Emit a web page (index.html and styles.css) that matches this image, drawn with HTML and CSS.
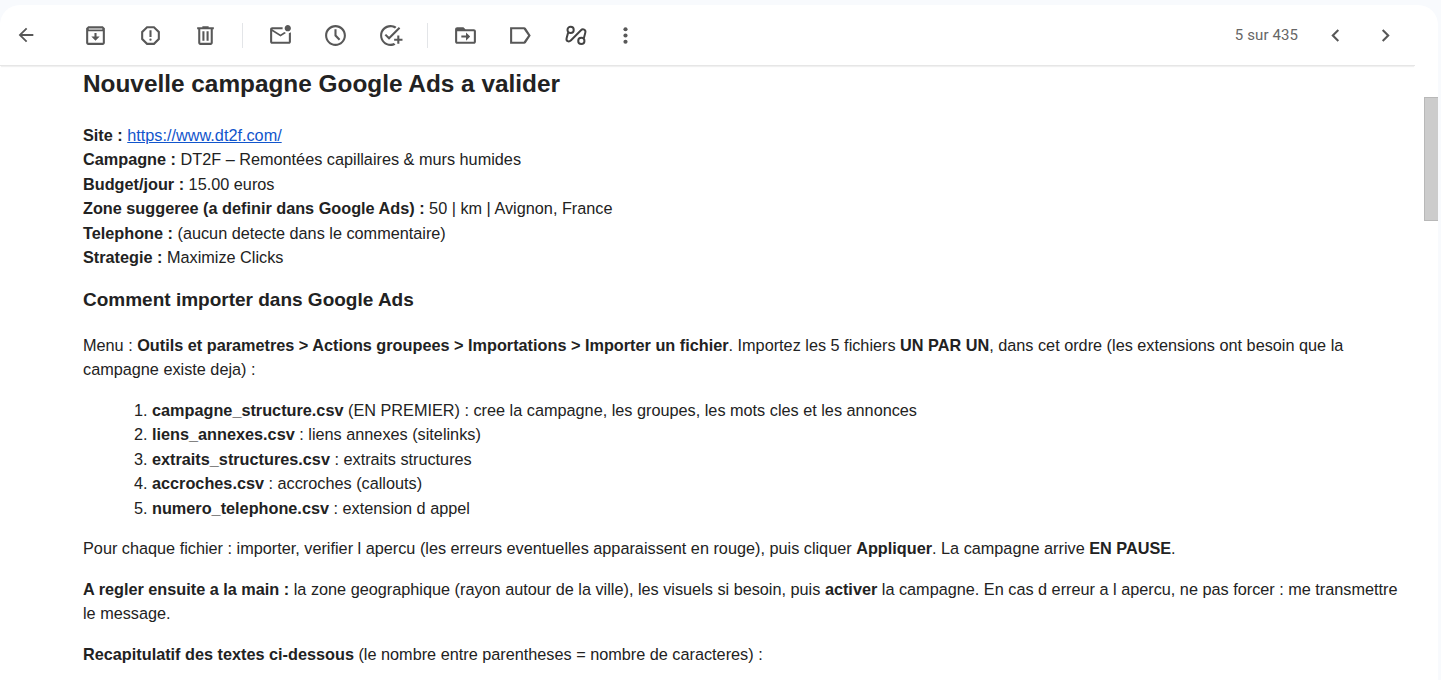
FILE: index.html
```
<!DOCTYPE html>
<html lang="fr">
<head>
    <meta charset="UTF-8">
    <meta name="viewport" content="width=device-width, initial-scale=1.0">
    <title>Nouvelle campagne Google Ads a valider</title>
    <link rel="stylesheet" href="styles.css">
</head>
<body>

<div class="panel">
    <div class="toolbar">
        <button class="tool back" aria-label="Retour">
            <svg viewBox="0 0 24 24"><path d="M20 11H7.83l5.59-5.59L12 4l-8 8 8 8 1.41-1.41L7.83 13H20v-2z"/></svg>
        </button>
        <button class="tool" aria-label="Archiver">
            <svg viewBox="0 0 24 24"><path d="M19 3H5L3 5v14c0 1.100.9 2 2 2h14c1.100 0 2-.9 2-2V5l-2-2zM5 19V8h14v11H5z"/><path d="M5.500 4.800h13V6.600h-13z" class="light"/><path d="M11 9.500v3.500H8l4 4 4-4h-3V9.500z"/></svg>
        </button>
        <button class="tool" aria-label="Signaler comme spam">
            <svg viewBox="0 0 24 24"><path d="M15.730 3H8.270L3 8.270v7.460L8.270 21h7.460L21 15.730V8.270L15.730 3zM19 14.900L14.900 19H9.100L5 14.900V9.100L9.100 5h5.800L19 9.100v5.800z"/><path d="M11 7h2v6.500h-2z"/><circle cx="12" cy="16" r="1.100"/></svg>
        </button>
        <button class="tool" aria-label="Supprimer">
            <svg viewBox="0 0 24 24"><path d="M15 4V3H9v1H4v2h1v13c0 1.100.9 2 2 2h10c1.100 0 2-.9 2-2V6h1V4h-5zm2 15H7V6h10v13z"/><path d="M9 8h2v9H9zm4 0h2v9h-2z"/></svg>
        </button>
        <span class="divider"></span>
        <button class="tool" aria-label="Marquer comme non lu">
            <svg viewBox="0 0 24 24"><path d="M22 8.980V18c0 1.100-.9 2-2 2H4c-1.100 0-2-.9-2-2V6c0-1.100.9-2 2-2h10.100c-.1.320-.1.660-.1 1s0 .680.100 1H4l8 5 3.670-2.290c.470.430 1.020.760 1.630.980L12 13 4 8v10h16V9.900c.740-.150 1.420-.480 2-.920zM16 5c0 1.660 1.340 3 3 3s3-1.340 3-3-1.340-3-3-3-3 1.340-3 3z"/></svg>
        </button>
        <button class="tool" aria-label="Mettre en attente">
            <svg viewBox="0 0 24 24"><path d="M11.990 2C6.470 2 2 6.480 2 12s4.470 10 9.990 10C17.520 22 22 17.520 22 12S17.520 2 11.990 2zM12 20c-4.420 0-8-3.580-8-8s3.580-8 8-8 8 3.580 8 8-3.580 8-8 8z"/><path d="M11 6h2v5.600l3.600 3.700-1.400 1.400L11 12.400z"/></svg>
        </button>
        <button class="tool" aria-label="Ajouter à Tasks">
            <svg viewBox="0 0 24 24"><path d="M21.400 5.180L10.590 16.100l-4.240-4.240 1.410-1.410 2.830 2.830 9.400-9.500 1.410 1.400zM12 20c-4.410 0-8-3.590-8-8s3.590-8 8-8c1.570 0 3.040.460 4.280 1.250l1.450-1.450C16.100 2.670 14.130 2 12 2 6.480 2 2 6.480 2 12s4.480 10 10 10c1.730 0 3.360-.440 4.780-1.220l-1.500-1.500c-1 .460-2.110.720-3.280.720zm6.500-5h-3v2h3v3h2v-3h3v-2h-3v-3h-2v3z"/></svg>
        </button>
        <span class="divider"></span>
        <button class="tool" aria-label="Déplacer vers">
            <svg viewBox="0 0 24 24"><path d="M20 6h-8l-2-2H4c-1.100 0-2 .9-2 2v12c0 1.100.9 2 2 2h16c1.100 0 2-.9 2-2V8c0-1.100-.9-2-2-2zm0 12H4V8h16v10z"/><path d="M3 5h7l2 2.500H3zM12.500 9v3H8v2h4.500v3l4-4z"/></svg>
        </button>
        <button class="tool" aria-label="Libellés">
            <svg viewBox="0 0 24 24"><path d="M15.500 4H2v16h13.500c.6 0 1.200-.3 1.600-.8L21.800 12l-4.700-7.200C16.700 4.300 16.100 4 15.500 4zm-.4 14H4V6h11.100l4.200 6-4.200 6z"/></svg>
        </button>
        <button class="tool" aria-label="Filtrer les messages similaires">
            <svg viewBox="0 0 24 24" class="line"><circle cx="7.300" cy="6.600" r="3"/><circle cx="17.600" cy="17.200" r="3"/><path d="M5 9l-1.500 5.400c-.8 3.200 2.100 4.200 4.200 2.100l9.300-9.300c2.200-2.200 5.200-.7 4.400 2.100L20 14.600"/></svg>
        </button>
        <button class="tool more" aria-label="Plus">
            <svg viewBox="0 0 24 24"><circle cx="12" cy="6" r="2"/><circle cx="12" cy="12" r="2"/><circle cx="12" cy="18" r="2"/></svg>
        </button>
        <div class="pager">
            <span class="count">5 sur 435</span>
            <button class="page" aria-label="Plus récent">
                <svg viewBox="0 0 24 24"><path d="M15.410 7.410L14 6l-6 6 6 6 1.410-1.410L10.830 12z"/></svg>
            </button>
            <button class="page" aria-label="Plus ancien">
                <svg viewBox="0 0 24 24"><path d="M10 6L8.590 7.410 13.170 12l-4.580 4.590L10 18l6-6z"/></svg>
            </button>
        </div>
    </div>

    <div class="content">
        <div class="mail">
            <h2>Nouvelle campagne Google Ads a valider</h2>
            <p>
                <b>Site :</b> <a href="https://www.dt2f.com/">https://www.dt2f.com/</a><br>
                <b>Campagne :</b> DT2F – Remontées capillaires &amp; murs humides<br>
                <b>Budget/jour :</b> 15.00 euros<br>
                <b>Zone suggeree (a definir dans Google Ads) :</b> 50 | km | Avignon, France<br>
                <b>Telephone :</b> (aucun detecte dans le commentaire)<br>
                <b>Strategie :</b> Maximize Clicks
            </p>
            <h3>Comment importer dans Google Ads</h3>
            <p>Menu : <b>Outils et parametres &gt; Actions groupees &gt; Importations &gt; Importer un fichier</b>. Importez les 5 fichiers <b>UN PAR UN</b>, dans cet ordre (les extensions ont besoin que la campagne existe deja) :</p>
            <ol>
                <li><b>campagne_structure.csv</b> (EN PREMIER) : cree la campagne, les groupes, les mots cles et les annonces</li>
                <li><b>liens_annexes.csv</b> : liens annexes (sitelinks)</li>
                <li><b>extraits_structures.csv</b> : extraits structures</li>
                <li><b>accroches.csv</b> : accroches (callouts)</li>
                <li><b>numero_telephone.csv</b> : extension d appel</li>
            </ol>
            <p>Pour chaque fichier : importer, verifier l apercu (les erreurs eventuelles apparaissent en rouge), puis cliquer <b>Appliquer</b>. La campagne arrive <b>EN PAUSE</b>.</p>
            <p><b>A regler ensuite a la main :</b> la zone geographique (rayon autour de la ville), les visuels si besoin, puis <b>activer</b> la campagne. En cas d erreur a l apercu, ne pas forcer : me transmettre le message.</p>
            <p><b>Recapitulatif des textes ci-dessous</b> (le nombre entre parentheses = nombre de caracteres) :</p>
        </div>
        <div class="scrollbar"></div>
    </div>
</div>

</body>
</html>
```
FILE: styles.css
```
body {
    margin: 0;
    height: 680px;
    overflow: hidden;
    background-color: #f8fafd;
    font-family: "Liberation Sans", Arial, sans-serif;
    color: #222222;
}
.panel {
    margin: 5px 3px 0 0;
    height: 675px;
    background-color: #ffffff;
    border-radius: 20px 20px 0 0;
    overflow: hidden;
}
.toolbar {
    display: flex;
    align-items: center;
    box-sizing: border-box;
    width: 1415px;
    height: 61px;
    border-bottom: 1px solid #e6e6e6;
    box-shadow: 0 2px 1px -1px rgba(0, 0, 0, 0.06);
}
button {
    display: flex;
    justify-content: center;
    align-items: center;
    height: 50px;
    padding: 0;
    border: none;
    background: none;
    cursor: pointer;
}
.tool {
    width: 55px;
}
.tool svg,
.page svg {
    width: 25px;
    height: 25px;
    fill: #585858;
}
.tool .light {
    fill: #b0b0b0;
}
.tool .line {
    fill: none;
    stroke: #444444;
    stroke-width: 1.9;
}
.back {
    width: 51px;
    margin-right: 16.5px;
}
.tool.back svg {
    width: 22px;
    height: 22px;
}
.more {
    width: 46px;
}
.divider {
    width: 1px;
    height: 25px;
    margin: 0 9.5px;
    background-color: #e3e5e8;
}
.pager {
    display: flex;
    align-items: center;
    margin-left: auto;
    margin-right: 5px;
}
.count {
    margin-right: 12px;
    font-family: Roboto, sans-serif;
    font-size: 15px;
    letter-spacing: 0.1px;
    color: #666666;
}
.page {
    width: 50px;
}
.content {
    display: flex;
    justify-content: space-between;
    align-items: flex-start;
}
.mail {
    width: 1320px;
    padding-left: 83px;
    font-size: 16.25px;
    line-height: 24.375px;
}
.mail h2 {
    margin: 0 0 20.57px;
    font-size: 24.375px;
    line-height: 36.5px;
}
.mail h3 {
    margin: 16.7px 0 18.55px;
    font-size: 19px;
    line-height: 28.5px;
}
.mail p {
    margin: 16.25px 0;
}
.mail h2 + p,
.mail h3 + p {
    margin-top: 0;
}
.mail ol {
    margin: 16.25px 0;
    padding-left: 69px;
}
.mail a {
    color: #1155cc;
}
.scrollbar {
    box-sizing: border-box;
    width: 14px;
    height: 124px;
    margin-top: 31px;
    background-color: #cccccc;
    border: 1px solid #b8b8b8;
    border-right: none;
}
```
